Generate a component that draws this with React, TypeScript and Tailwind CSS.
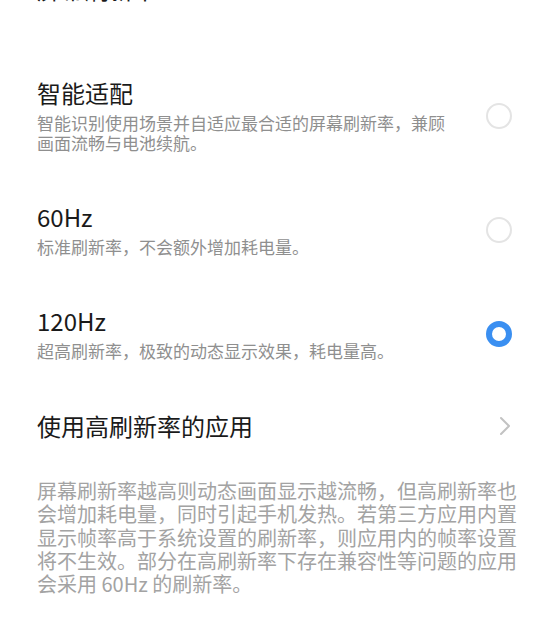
export default function App() {
  const font = { fontFamily: '"Noto Sans CJK SC", "Noto Sans", sans-serif' }

  const options = [
    { title: "智能适配", desc: "智能识别使用场景并自适应最合适的屏幕刷新率，兼顾画面流畅与电池续航。", selected: false },
    { title: "60Hz", desc: "标准刷新率，不会额外增加耗电量。", selected: false },
    { title: "120Hz", desc: "超高刷新率，极致的动态显示效果，耗电量高。", selected: true },
  ]

  return (
    <main className="w-[550px] h-[617px] overflow-hidden bg-white" style={font}>
      <div className="pl-[37px] pr-[38px] flex flex-col">
        {/* clipped section heading */}
        <p className="-mt-[26px] text-[24px] leading-[30px] text-[#1a1a1a]">屏幕刷新率</p>

        <div className="flex flex-col gap-[49px] mt-[74px]">
          {options.map((o) => (
            <div key={o.title} className="flex items-center justify-between">
              <div className="flex flex-col w-[410px]">
                <span className="text-[24px] leading-[30px] text-[#1a1a1a]">{o.title}</span>
                <span className="mt-[5px] text-[17px] leading-[20px] text-[#8f8f8f]">{o.desc}</span>
              </div>
              {o.selected ? (
                <div className="w-[26px] h-[26px] rounded-full border-[6px] border-[#3a8ff1]" />
              ) : (
                <div className="w-[26px] h-[26px] rounded-full border-[2.5px] border-[#e4e4e4]" />
              )}
            </div>
          ))}

          <div className="flex items-center justify-between pt-[1px]">
            <span className="text-[24px] leading-[30px] text-[#1a1a1a]">使用高刷新率的应用</span>
            <svg width="12" height="20" viewBox="0 0 12 20" fill="none" className="mr-[1px]">
              <path d="M2 2 L10 10 L2 18" stroke="#c2c2c2" strokeWidth="2" strokeLinecap="round" strokeLinejoin="round" />
            </svg>
          </div>
        </div>

        <p className="mt-[38px] w-[482px] text-[20px] leading-[23.3px] text-[#a3a3a3]">
          屏幕刷新率越高则动态画面显示越流畅，但高刷新率也会增加耗电量，同时引起手机发热。若第三方应用内置显示帧率高于系统设置的刷新率，则应用内的帧率设置将不生效。部分在高刷新率下存在兼容性等问题的应用会采用 60Hz 的刷新率。
        </p>
      </div>
    </main>
  )
}
